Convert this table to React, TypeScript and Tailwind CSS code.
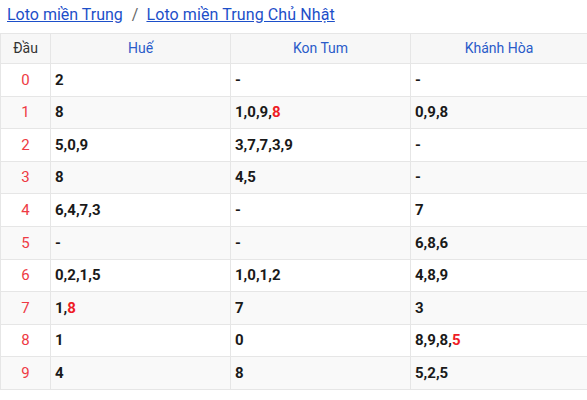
const rows: { d: string; hue: [string, string?]; kt: [string, string?]; kh: [string, string?] }[] = [
  { d: "0", hue: ["2"], kt: ["-"], kh: ["-"] },
  { d: "1", hue: ["8"], kt: ["1,0,9,", "8"], kh: ["0,9,8"] },
  { d: "2", hue: ["5,0,9"], kt: ["3,7,7,3,9"], kh: ["-"] },
  { d: "3", hue: ["8"], kt: ["4,5"], kh: ["-"] },
  { d: "4", hue: ["6,4,7,3"], kt: ["-"], kh: ["7"] },
  { d: "5", hue: ["-"], kt: ["-"], kh: ["6,8,6"] },
  { d: "6", hue: ["0,2,1,5"], kt: ["1,0,1,2"], kh: ["4,8,9"] },
  { d: "7", hue: ["1,", "8"], kt: ["7"], kh: ["3"] },
  { d: "8", hue: ["1"], kt: ["0"], kh: ["8,9,8,", "5"] },
  { d: "9", hue: ["4"], kt: ["8"], kh: ["5,2,5"] },
];

function Cell({ v }: { v: [string, string?] }) {
  return (
    <td className="border border-[#e6e6e6] pl-[4px] text-[15px] font-bold text-[#1a1a1a]">
      {v[0]}
      {v[1] && <span className="text-[#ee1c25]">{v[1]}</span>}
    </td>
  );
}

export default function App() {
  return (
    <div className="w-[587px] h-[400px] bg-white font-['Roboto',sans-serif] overflow-hidden">
      <div className="h-[33px] flex items-center pl-[7px] text-[16px] pb-[3px]">
        <a href="#" className="text-[#1d4fc9] underline">Loto miền Trung</a>
        <span className="ml-[9px] mr-[8px] text-[#666]">/</span>
        <a href="#" className="text-[#1d4fc9] underline tracking-[0.1px]">Loto miền Trung Chủ Nhật</a>
      </div>
      <table className="w-[588px] border-collapse table-fixed">
        <colgroup>
          <col className="w-[50px]" />
          <col className="w-[180px]" />
          <col className="w-[180px]" />
          <col />
        </colgroup>
        <thead>
          <tr className="h-[30px] bg-[#f7f7f7] text-[14px]">
            <th className="border border-[#e6e6e6] font-normal text-[#333]">Đầu</th>
            <th className="border border-[#e6e6e6] font-normal text-[#2a5bc9]">Huế</th>
            <th className="border border-[#e6e6e6] font-normal text-[#2a5bc9]">Kon Tum</th>
            <th className="border border-[#e6e6e6] font-normal text-[#2a5bc9]">Khánh Hòa</th>
          </tr>
        </thead>
        <tbody>
          {rows.map((r, i) => (
            <tr key={r.d} className={`h-[32.6px] ${i % 2 === 1 ? "bg-[#f9f9f9]" : "bg-white"}`}>
              <td className="border border-[#e6e6e6] text-center text-[15px] text-[#ee3a44]">{r.d}</td>
              <Cell v={r.hue} />
              <Cell v={r.kt} />
              <Cell v={r.kh} />
            </tr>
          ))}
        </tbody>
      </table>
    </div>
  );
}
